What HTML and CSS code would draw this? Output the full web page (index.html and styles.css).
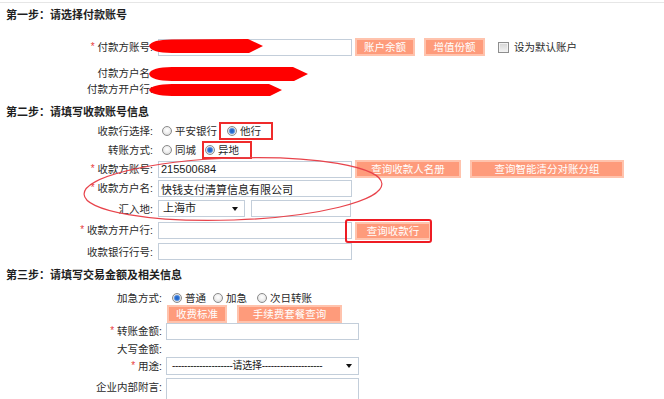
FILE: index.html
```html
<!DOCTYPE html>
<html lang="zh-CN">
<head>
<meta charset="utf-8">
<title>转账汇款</title>
<link rel="stylesheet" href="styles.css">
</head>
<body>
<div class="page">
  <div class="topline"></div>

  <h3 class="step step1">第一步：请选择付款账号</h3>
  <div class="row r-acct">
    <label class="lbl"><i class="req">*</i>付款方账号:</label>
    <input class="ipt" type="text">
    <button class="btn w60 ml3">账户余额</button>
    <button class="btn w61 ml9">增值份额</button>
    <span class="chk"></span><span class="chk-t">设为默认账户</span>
    <svg class="mask m1" width="116" height="16" viewBox="0 0 116 16"><path d="M1 8 C3 3 10 2 24 1.5 L100 1 L115 8 L101 15 L24 15 C10 14.5 3 13 1 8 Z" fill="#ff0000"/></svg>
  </div>
  <div class="row r-name">
    <label class="lbl">付款方户名:</label>
    <svg class="mask m2" width="161" height="16" viewBox="0 0 161 16"><path d="M1 8 C3 3 10 1.5 24 1 L145 1 L160 8 L146 15 L24 15 C10 14.5 3 13 1 8 Z" fill="#ff0000"/></svg>
  </div>
  <div class="row r-bank">
    <label class="lbl">付款方开户行:</label>
    <svg class="mask m3" width="135" height="14" viewBox="0 0 135 14"><path d="M1 7 C3 3 10 1.5 24 1 L121 1 L134 7 L122 13 L24 13 C10 12.5 3 11 1 7 Z" fill="#ff0000"/></svg>
  </div>

  <h3 class="step step2">第二步：请填写收款账号信息</h3>
  <div class="row r-sel">
    <label class="lbl">收款行选择:</label>
    <span class="radio ml9"></span><span class="opt">平安银行</span>
    <span class="mark mk-bank"><span class="radio on"></span><span class="opt">他行</span></span>
  </div>
  <div class="row r-mode">
    <label class="lbl">转账方式:</label>
    <span class="radio ml9"></span><span class="opt">同城</span>
    <span class="mark mk-mode"><span class="radio on"></span><span class="opt">异地</span></span>
  </div>
  <div class="row r-no">
    <label class="lbl"><i class="req">*</i>收款方账号:</label>
    <input class="ipt" type="text" value="215500684">
    <button class="btn w106 ml3">查询收款人名册</button>
    <button class="btn w154 ml9">查询智能清分对账分组</button>
  </div>
  <div class="row r-hm">
    <label class="lbl"><i class="req">*</i>收款方户名:</label>
    <input class="ipt" type="text" value="快钱支付清算信息有限公司">
  </div>
  <div class="row r-city">
    <label class="lbl">汇入地:</label>
    <span class="sel sel-city">上海市</span>
    <input class="ipt ipt-city" type="text">
  </div>
  <div class="row r-kh">
    <label class="lbl"><i class="req">*</i>收款方开户行:</label>
    <input class="ipt" type="text">
    <span class="framed ml3"><button class="btn w76">查询收款行</button></span>
  </div>
  <div class="row r-hh">
    <label class="lbl">收款银行行号:</label>
    <input class="ipt" type="text">
  </div>

  <h3 class="step step3">第三步：请填写交易金额及相关信息</h3>
  <div class="row r-jj">
    <label class="lbl lbl3">加急方式:</label>
    <span class="radio on ml10"></span><span class="opt">普通</span>
    <span class="radio ml7"></span><span class="opt">加急</span>
    <span class="radio ml10"></span><span class="opt">次日转账</span>
  </div>
  <div class="row r-fee">
    <span class="lbl lbl3"></span>
    <button class="btn w60 ml5">收费标准</button>
    <button class="btn w105 ml10">手续费套餐查询</button>
  </div>
  <div class="row r-amt">
    <label class="lbl lbl3"><i class="req">*</i>转账金额:</label>
    <input class="ipt ipt3" type="text">
  </div>
  <div class="row r-dx">
    <label class="lbl lbl3">大写金额:</label>
  </div>
  <div class="row r-yt">
    <label class="lbl lbl3"><i class="req">*</i>用途:</label>
    <span class="sel sel-yt">--------------------请选择--------------------</span>
  </div>
  <div class="row r-fy">
    <label class="lbl lbl3">企业内部附言:</label>
    <input class="ipt ipt3 ipt-fy" type="text">
  </div>

  <svg class="ring" width="664" height="399" viewBox="0 0 664 399">
    <ellipse cx="233" cy="189" rx="149" ry="31" transform="rotate(-2 233 189)" fill="none" stroke="#e8434b" stroke-width="1.2"/>
  </svg>
</div>
</body>
</html>
```

FILE: styles.css
```css
html, body {
  margin: 0;
  padding: 0;
  background: #fff;
}

body {
  font-family: "Liberation Sans", "Noto Sans CJK SC", sans-serif;
  font-size: 10.5px;
  color: #2a2a2a;
}

.page {
  position: relative;
  width: 664px;
  height: 399px;
  overflow: hidden;
}

.topline {
  height: 2px;
  border-bottom: 1px solid #e6e6e6;
}

.step {
  margin: 0;
  padding-left: 6px;
  height: 14px;
  line-height: 14px;
  font-size: 11px;
  font-weight: bold;
  color: #1e1e1e;
}

.step1 { margin-top: 5px; }
.step2 { margin-top: 8px; }
.step3 { margin-top: 8px; }

.row {
  position: relative;
  display: flex;
  align-items: center;
  height: 17px;
  margin-top: 3px;
  white-space: nowrap;
}

.r-acct { margin-top: 16px; height: 18px; }
.r-name { margin-top: 9px; height: 16px; }
.r-bank { margin-top: 0; height: 16px; }
.r-sel  { margin-top: 3px; height: 18px; }
.r-mode { margin-top: 1px; height: 18px; }
.r-no   { margin-top: 1px; height: 18px; }
.r-hm   { margin-top: 2px; }
.r-city { margin-top: 3px; }
.r-kh   { margin-top: 5px; }
.r-hh   { margin-top: 4px; }
.r-jj   { margin-top: 8px; height: 15px; }
.r-fee  { margin-top: 0; }
.r-amt  { margin-top: 1px; }
.r-dx   { margin-top: 1px; height: 16px; }
.r-yt   { margin-top: 0; height: 18px; }
.r-fy   { margin-top: 3px; height: 18px; }

.lbl {
  flex: none;
  width: 153px;
  text-align: right;
  line-height: 14px;
  color: #2a2a2a;
}

.lbl3 { width: 162px; }

.req {
  font-style: normal;
  color: #e83c3c;
  margin-right: 3px;
  font-size: 10px;
  position: relative;
  top: -1px;
}

.ipt {
  flex: none;
  box-sizing: border-box;
  width: 194px;
  height: 17px;
  margin: 0 0 0 5px;
  padding: 0 2px;
  border: 1px solid #c3ceda;
  background: #fff;
  font-family: "Liberation Sans", "Noto Sans CJK SC", sans-serif;
  font-size: 11px;
  color: #1a1a1a;
  outline: none;
}

.ipt-city { width: 100px; margin-left: 6px; }
.ipt3 { width: 193px; margin-left: 4px; }
.ipt-fy { height: 22px; align-self: flex-start; }

.btn {
  flex: none;
  box-sizing: border-box;
  height: 18px;
  padding: 0;
  border: 2px solid #ffc3ad;
  background: #fe9b7b;
  color: #fff;
  font-family: "Liberation Sans", "Noto Sans CJK SC", sans-serif;
  font-size: 10.5px;
  line-height: 14px;
  text-align: center;
}

.w60 { width: 60px; }
.w61 { width: 61px; }
.w76 { width: 76px; }
.w105 { width: 105px; }
.w106 { width: 106px; }
.w154 { width: 154px; }

.ml3 { margin-left: 3px; }
.ml5 { margin-left: 5px; }
.ml7 { margin-left: 7px; }
.ml9 { margin-left: 9px; }
.ml10 { margin-left: 10px; }

.chk {
  flex: none;
  box-sizing: border-box;
  width: 11px;
  height: 11px;
  margin-left: 13px;
  border: 1px solid #8e8e8e;
  background: linear-gradient(#d4d4d4, #f4f4f4);
  box-shadow: inset 0 0 0 1px #f2f2f2;
}

.chk-t {
  margin-left: 5px;
  line-height: 14px;
}

.radio {
  flex: none;
  box-sizing: border-box;
  width: 10px;
  height: 10px;
  border: 1px solid #8a8a8a;
  border-radius: 50%;
  background: radial-gradient(circle at 50% 40%, #fff 0, #f0f0f0 45%, #cfcfcf 100%);
}

.radio.on {
  background: radial-gradient(circle, #1f5fc0 0, #2f74d6 2px, #8fb4e6 3px, #e8e8e8 3.6px, #d0d0d0 100%);
}

.opt {
  margin-left: 3px;
  line-height: 14px;
}

.mark {
  display: flex;
  align-items: center;
  box-sizing: border-box;
  height: 18px;
  border: 2px solid #ef2b2b;
}

.mk-bank { margin-left: 2px; width: 54px; padding-left: 6px; }
.mk-mode { margin-left: 6px; width: 50px; padding-left: 1px; }

.sel {
  flex: none;
  position: relative;
  box-sizing: border-box;
  height: 17px;
  margin-left: 5px;
  padding-left: 4px;
  border: 1px solid #c3ceda;
  background: #fff;
  font-size: 11px;
  line-height: 15px;
  color: #1a1a1a;
}

.sel::after {
  content: "";
  position: absolute;
  right: 6px;
  top: 6px;
  border-left: 3.5px solid transparent;
  border-right: 3.5px solid transparent;
  border-top: 4px solid #111;
}

.sel-city { width: 87px; }

.sel-yt {
  width: 193px;
  height: 18px;
  margin-left: 4px;
  padding-left: 5px;
  font-size: 10px;
  line-height: 16px;
  letter-spacing: -0.3px;
  overflow: hidden;
}

.framed {
  position: relative;
  display: flex;
}

.framed::after {
  content: "";
  position: absolute;
  left: -10px;
  right: -1px;
  top: -3px;
  bottom: -3px;
  border: 2px solid #ee1c24;
  border-radius: 3px;
}

.mask {
  position: absolute;
  left: 148px;
}

.m1 { top: 0; }
.m2 { top: 1px; }
.m3 { top: 2px; }

.ring {
  position: absolute;
  left: 0;
  top: 0;
  pointer-events: none;
}
```
